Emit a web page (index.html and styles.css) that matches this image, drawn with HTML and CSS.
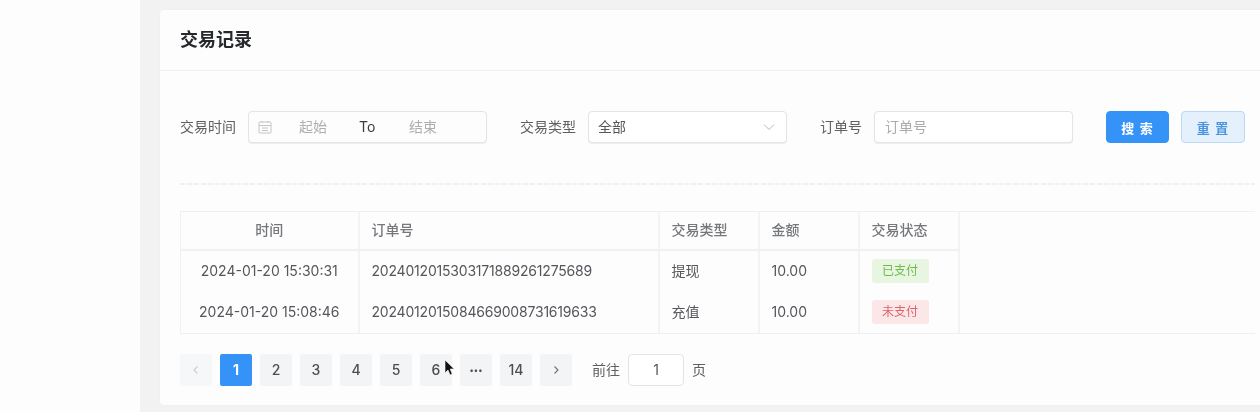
FILE: index.html
```html
<!DOCTYPE html>
<html lang="zh-CN">
<head>
<meta charset="utf-8">
<title>交易记录</title>
<link rel="stylesheet" href="styles.css">
</head>
<body>
<div class="shell">
  <aside class="sidebar"></aside>
  <main class="main">
    <section class="card">
      <h1 class="card-title">交易记录</h1>
      <div class="card-body">
        <form class="filters">
          <label class="label">交易时间</label>
          <div class="field date-field">
            <svg class="cal" width="14" height="14" viewBox="0 0 14 14" fill="none" stroke="#c4c4c4" stroke-width="1"><rect x="1" y="2" width="12" height="11" rx="1"/><path d="M1 5.500h12M4 1v2M10 1v2M4 8h6M4 10.500h6"/></svg>
            <span class="date-part">起始</span>
            <span class="date-to">To</span>
            <span class="date-part">结束</span>
          </div>
          <label class="label label-type">交易类型</label>
          <div class="field select-field">
            <span>全部</span>
            <svg width="12" height="12" viewBox="0 0 12 12" fill="none" stroke="#b5b8be" stroke-width="1"><path d="M1 3.500l5 5 5-5"/></svg>
          </div>
          <label class="label label-order">订单号</label>
          <div class="field order-field">订单号</div>
          <button type="button" class="btn btn-primary">搜 索</button>
          <button type="button" class="btn btn-plain">重 置</button>
        </form>
        <div class="dashed"></div>
        <table class="table">
          <colgroup>
            <col class="c1"><col class="c2"><col class="c3"><col class="c4"><col class="c5"><col>
          </colgroup>
          <thead>
            <tr><th class="center">时间</th><th>订单号</th><th>交易类型</th><th>金额</th><th>交易状态</th><th class="blank"></th></tr>
          </thead>
          <tbody>
            <tr><td class="center">2024-01-20 15:30:31</td><td class="order-no">2024012015303171889261275689</td><td>提现</td><td>10.00</td><td><span class="tag tag-ok">已支付</span></td><td class="blank"></td></tr>
            <tr><td class="center">2024-01-20 15:08:46</td><td class="order-no">2024012015084669008731619633</td><td>充值</td><td>10.00</td><td><span class="tag tag-bad">未支付</span></td><td class="blank"></td></tr>
          </tbody>
        </table>
        <nav class="pager">
          <span class="page disabled"><svg width="10" height="10" viewBox="0 0 10 10" fill="none" stroke="#c8cbd0" stroke-width="1.100"><path d="M6.500 1.500L3 5l3.500 3.500"/></svg></span>
          <span class="page active">1</span>
          <span class="page">2</span>
          <span class="page">3</span>
          <span class="page">4</span>
          <span class="page">5</span>
          <span class="page">6</span>
          <span class="page more">•••</span>
          <span class="page">14</span>
          <span class="page"><svg width="10" height="10" viewBox="0 0 10 10" fill="none" stroke="#6b6f76" stroke-width="1.100"><path d="M3.500 1.500L7 5 3.500 8.500"/></svg></span>
          <span class="goto">前往</span>
          <span class="goto-input">1</span>
          <span class="goto-end">页</span>
          <svg class="cursor" width="11" height="17" viewBox="0 0 11 17"><path d="M1 1v13l3-3 2 5 2.200-1-2-5h4z" fill="#111" stroke="#fff" stroke-width=".6"/></svg>
        </nav>
      </div>
    </section>
  </main>
</div>
</body>
</html>
```
FILE: styles.css
```css
* { box-sizing: border-box; }
html, body { margin: 0; height: 412px; overflow: hidden; }
body {
  font-family: Inter, "Noto Sans CJK SC", sans-serif;
  font-size: 14px;
  line-height: 20px;
  color: #606266;
  background: #fdfdfd;
}
.shell { display: flex; height: 412px; width: 1260px; overflow: hidden; filter: blur(.35px); }
.sidebar { flex: 0 0 140px; background: #fdfdfd; }
.main {
  flex: 1 0 0;
  min-width: 0;
  background: #f2f2f2;
  padding: 9px 0 6px 19px;
}
.card {
  width: 1150px;
  height: 397px;
  background: #fdfdfe;
  border: 1px solid #f0f0f0;
  border-radius: 4px;
}
.card-title {
  margin: 0;
  height: 61px;
  padding-left: 20px;
  font-size: 18px;
  line-height: 59px;
  font-weight: 600;
  color: #26282b;
  border-bottom: 1px solid #efefef;
}
.card-body { padding: 40px 0 0 20px; }
.filters { display: flex; align-items: center; height: 32px; }
.label { color: #5e6063; white-space: nowrap; }
.field {
  display: flex;
  align-items: center;
  height: 32px;
  background: #fff;
  border: 1px solid #e3e4e6;
  border-radius: 4px;
  box-shadow: 0 1px 1px #eeeeee;
}
.date-field { width: 239px; margin-left: 12px; padding-left: 9px; background: #fdfdfd; }
.cal { flex: none; }
.date-part { color: #adafb3; width: 28px; margin-left: 27px; }
.date-to { color: #3a3c40; margin-left: 32px; width: 32px; }
.date-to + .date-part { margin-left: 18px; }
.label-type { margin-left: 33px; }
.select-field { width: 199px; margin-left: 12px; padding: 0 11px 0 9px; justify-content: space-between; color: #55575b; }
.label-order { margin-left: 33px; }
.order-field { width: 199px; margin-left: 12px; padding-left: 10px; color: #a8aaae; }
.btn {
  width: 64px;
  height: 32px;
  padding: 0;
  border-radius: 4px;
  font: 600 13px Inter, "Noto Sans CJK SC", sans-serif;
  letter-spacing: 1px;
  cursor: pointer;
}
.btn-primary { width: 63px; margin-left: 33px; background: #3593f8; border: 1px solid #3593f8; color: #fff; }
.btn-plain { margin-left: 12px; background: #e4f0fb; border: 1px solid #bcd9f4; color: #4a94e0; }
.dashed {
  margin: 40px 0 26px;
  width: 1075px;
  height: 2px;
  background: repeating-linear-gradient(90deg, #f0f0f0 0 5px, #fafafa 5px 7px);
}
.table {
  width: 1075px;
  table-layout: fixed;
  border-collapse: collapse;
  border: 1px solid #eff0f2;
  border-right: 0;
  background: #fdfdfe;
}
.c1 { width: 178px; }
.c2 { width: 300px; }
.c3, .c4, .c5 { width: 100px; }
.table th, .table td {
  padding: 0 12px;
  border-right: 2px solid #f2f3f4;
  text-align: left;
  white-space: nowrap;
  overflow: hidden;
}
.table th {
  height: 38px;
  font-weight: 500;
  color: #75777b;
  border-bottom: 2px solid #f0f1f2;
}
.table td { height: 42px; color: #54565a; }
.table .order-no { letter-spacing: -.2px; }
.table .center { text-align: center; padding: 0; }
.table .blank { border-right: 0; border-bottom: 0; }
.tag {
  display: inline-block;
  width: 57px;
  height: 24px;
  line-height: 24px;
  border-radius: 3px;
  font-size: 12px;
  text-align: center;
  vertical-align: middle;
}
.tag-ok { background: #e8f5e1; color: #6cbb4a; }
.tag-bad { background: #fbe6e8; color: #e0616a; }
.pager {
  position: relative;
  display: flex;
  align-items: center;
  gap: 8px;
  margin-top: 20px;
  height: 32px;
}
.page {
  display: flex;
  align-items: center;
  justify-content: center;
  width: 32px;
  height: 32px;
  border-radius: 2px;
  background: #f2f4f6;
  color: #4b4d51;
  font-weight: 500;
}
.page.disabled { background: #f6f7f8; }
.page.active { background: #3593f8; color: #fff; font-weight: 700; }
.page.more { font-size: 8px; letter-spacing: 0; }
.goto { margin-left: 12px; color: #5e6063; }
.goto-input {
  width: 56px;
  height: 32px;
  line-height: 30px;
  text-align: center;
  background: #fff;
  border: 1px solid #e3e4e6;
  border-radius: 4px;
  color: #54565a;
}
.goto-end { color: #5e6063; }
.cursor { position: absolute; left: 264px; top: 5px; }
```
